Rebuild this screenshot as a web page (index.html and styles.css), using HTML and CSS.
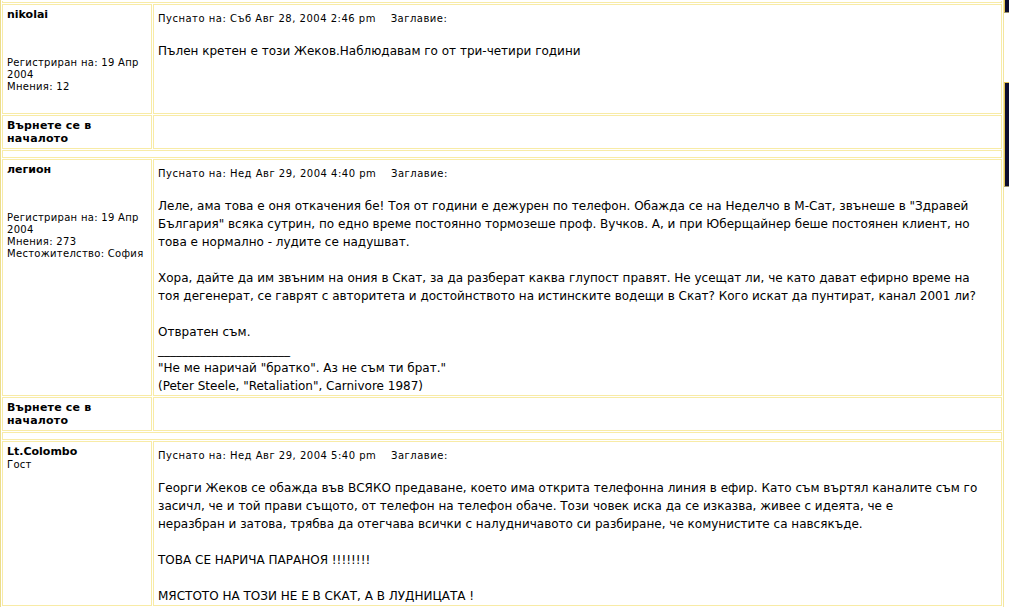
FILE: index.html
```html
<!DOCTYPE html>
<html lang="bg">
  <head>
    <meta charset="UTF-8" />
    <title>Жеков - форум</title>
    <link rel="stylesheet" href="styles.css">
  </head>
  <body>
    <div class="page">
      <table class="forumline">
        <colgroup>
          <col class="col-author" />
          <col />
        </colgroup>
        <tr><td class="spacer first" colspan="2"><div></div></td></tr>

        <!-- пост 1 -->
        <tr>
          <td class="author-cell">
            <div class="name">nikolai</div>
            <div class="profile">Регистриран на: 19 Апр 2004<br />Мнения: 12</div>
          </td>
          <td class="post-cell">
            <div class="postdetails">Пуснато на: Съб Авг 28, 2004 2:46 pm&nbsp;&nbsp;&nbsp;&nbsp;Заглавие:</div>
            <div class="postbody">Пълен кретен е този Жеков.Наблюдавам го от три-четири години</div>
          </td>
        </tr>
        <tr>
          <td><a class="nav" href="#top">Върнете се в началото</a></td>
          <td></td>
        </tr>
        <tr><td class="spacer" colspan="2"><div></div></td></tr>

        <!-- пост 2 -->
        <tr>
          <td class="author-cell">
            <div class="name">легион</div>
            <div class="profile">Регистриран на: 19 Апр 2004<br />Мнения: 273<br />Местожителство: София</div>
          </td>
          <td class="post-cell">
            <div class="postdetails">Пуснато на: Нед Авг 29, 2004 4:40 pm&nbsp;&nbsp;&nbsp;&nbsp;Заглавие:</div>
            <div class="postbody">Леле, ама това е оня откачения бе! Тоя от години е дежурен по телефон. Обажда се на Неделчо в М-Сат, звънеше в "Здравей България" всяка сутрин, по едно време постоянно тормозеше проф. Вучков. А, и при Юберщайнер беше постоянен клиент, но това е нормално - лудите се надушват.<br /><br />Хора, дайте да им звъним на ония в Скат, за да разберат каква глупост правят. Не усещат ли, че като дават ефирно време на<br />тоя дегенерат, се гаврят с авторитета и достойнството на истинските водещи в Скат? Кого искат да пунтират, канал 2001 ли?<br /><br />Отвратен съм.<br />______________________<br />"Не ме наричай "братко". Аз не съм ти брат."<br />(Peter Steele, "Retaliation", Carnivore 1987)</div>
          </td>
        </tr>
        <tr>
          <td><a class="nav" href="#top">Върнете се в началото</a></td>
          <td></td>
        </tr>
        <tr><td class="spacer" colspan="2"><div></div></td></tr>

        <!-- пост 3 -->
        <tr>
          <td class="author-cell">
            <div class="name">Lt.Colombo</div>
            <div class="rank">Гост</div>
          </td>
          <td class="post-cell">
            <div class="postdetails">Пуснато на: Нед Авг 29, 2004 5:40 pm&nbsp;&nbsp;&nbsp;&nbsp;Заглавие:</div>
            <div class="postbody">Георги Жеков се обажда във ВСЯКО предаване, което има открита телефонна линия в ефир. Като съм въртял каналите съм го засичл, че и той прави същото, от телефон на телефон обаче. Този човек иска да се изказва, живее с идеята, че е<br />неразбран и затова, трябва да отегчава всички с налудничавото си разбиране, че комунистите са навсякъде.<br /><br />ТОВА СЕ НАРИЧА ПАРАНОЯ !!!!!!!!<br /><br />МЯСТОТО НА ТОЗИ НЕ Е В СКАТ, А В ЛУДНИЦАТА !</div>
          </td>
        </tr>
      </table>

      <!-- лентата вдясно -->
      <div class="strip">
        <div class="block one"></div>
        <div class="block two"></div>
      </div>
    </div>
  </body>
</html>
```

FILE: styles.css
```css
html,
body {
  margin: 0;
  overflow: hidden; /* без скролбар */
  background: #ffffff;
}

body {
  font-family: "DejaVu Sans", Verdana, sans-serif;
  color: #000000;
}

.page {
  display: flex;
  align-items: flex-start;
}

.forumline {
  width: 1004px;
  table-layout: fixed;
  border-collapse: separate;
  border-spacing: 1px;
  border-left: 1px solid #ebdc8c;
  border-right: 1px solid #f3e6a0;
}

.forumline td {
  border: 1px solid #f8eba6;
  vertical-align: top;
  padding: 3px 4px;
}

.col-author {
  width: 150px;
}

.name {
  font-size: 11px;
  line-height: 14px;
  font-weight: bold;
}

.profile {
  font-size: 10px;
  line-height: 12px;
  letter-spacing: 0.3px;
  margin: 35px 0 17px;
}

.rank {
  font-size: 10px;
  line-height: 12px;
  letter-spacing: 0.3px;
}

.forumline td.post-cell {
  padding-bottom: 0;
}

.postdetails {
  font-size: 10px;
  line-height: 22px;
  letter-spacing: 0.5px;
}

.postbody {
  font-size: 12px;
  line-height: 18px;
  margin-top: 12px;
}

.nav {
  display: block;
  font-size: 11px;
  line-height: 13px;
  font-weight: bold;
  letter-spacing: 0.2px;
  color: #000000;
  text-decoration: none;
}

.forumline td.spacer {
  padding: 0;
}
.spacer div {
  height: 6px;
}
.forumline td.spacer.first {
  border-top: 0;
}
.spacer.first div {
  height: 1px;
}

.strip {
  flex: none;
  width: 5px;
}

.block {
  background: #0c0c2e;
  border-left: 1px solid #e4c256;
}
.block.one {
  height: 12px;
  border-bottom: 1px solid #9a9270;
}
.block.two {
  margin-top: 69px;
  height: 103px;
  border-top: 1px solid #e4c256;
  border-bottom: 1px solid #9a9270;
}
```
